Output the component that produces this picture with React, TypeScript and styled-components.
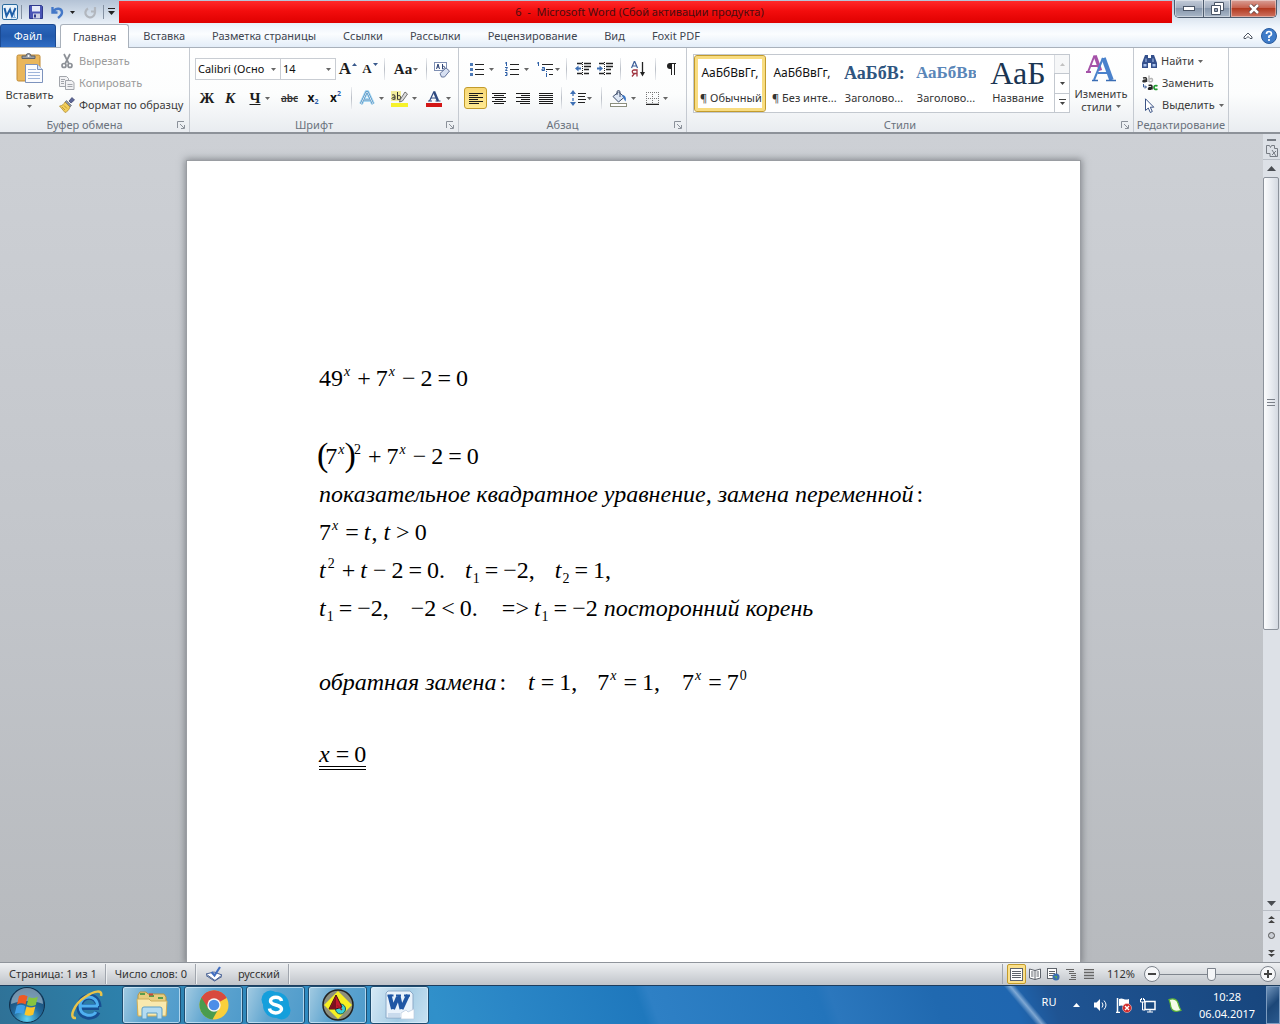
import React from "react";
import styled, { createGlobalStyle, css } from "styled-components";

const ui = `"Noto Sans", "Open Sans", sans-serif`;
const serif = `"Liberation Serif", "Times New Roman", serif`;

const GlobalStyle = createGlobalStyle`
  * { box-sizing: border-box; }
  body { margin: 0; font-family: ${ui}; font-size: 11px; line-height: 14px; color: #3b3b3b; }
  button, select, input { font: inherit; color: inherit; }
  button { border: 0; background: none; padding: 0; margin: 0; }
  svg { display: block; flex: none; }
`;

const Window = styled.div`
  height: 100vh;
  display: flex;
  flex-direction: column;
  overflow: hidden;
`;

/* ---------- title bar and tabs ---------- */

const Header = styled.header`
  flex: none;
  background: linear-gradient(#b4c3d6 0, #d3deea 14px, #eef4fb 26px, #fbfdff 34px, #e3edf8 47px);
  border-bottom: 1px solid #a9b1bb;
`;

const TitleBar = styled.div`
  display: flex;
  height: 24px;
`;

const QuickAccess = styled.div`
  display: flex;
  align-items: center;
  width: 119px;
  padding-left: 2px;
`;

const QuickButton = styled.button<{ $w: number }>`
  width: ${(p) => p.$w}px;
  height: 22px;
  display: flex;
  align-items: center;
  justify-content: center;
  gap: 6px;
`;

const QuickRule = styled.span`
  width: 1px;
  height: 14px;
  background: #8592a3;
`;

const Title = styled.h1`
  flex: 1;
  height: 22px;
  margin: 1px 2px 0 0;
  padding-right: 12px;
  font-size: 11px;
  font-weight: 400;
  line-height: 22px;
  text-align: center;
  white-space: pre;
  color: #4a0d10;
  background: linear-gradient(#ff2a2a, #f30d0d 45%, #df0000);
`;

const WindowButtons = styled.div`
  display: flex;
  height: 18px;
  margin-right: 3px;
  border: 1px solid #4e5c6e;
  border-top: 0;
  border-radius: 0 0 5px 5px;
  overflow: hidden;
`;

const WindowButton = styled.button<{ $w: number; $close?: boolean }>`
  width: ${(p) => p.$w}px;
  display: flex;
  align-items: center;
  justify-content: center;
  box-shadow: inset 0 0 0 1px rgba(255, 255, 255, 0.4);
  background: ${(p) =>
    p.$close
      ? "linear-gradient(#d9a097, #c8624f 45%, #b23a20 50%, #cf7462)"
      : "linear-gradient(#c3ccd9, #a4b0c1 45%, #8797ac 50%, #a9b7c8)"};
  & + & { border-left: 1px solid #4e5c6e; }
`;

const TabRow = styled.nav`
  display: flex;
  align-items: stretch;
  height: 23px;
`;

const FileTab = styled.button`
  width: 56px;
  border-radius: 3px 3px 0 0;
  border: 1px solid #1b4a93;
  border-bottom: 0;
  color: #fff;
  background: linear-gradient(#2d68bd, #2159ac 50%, #2f6cc4);
`;

const Tab = styled.button<{ $active?: boolean }>`
  padding: 0 13px 0 14px;
  color: #3f4650;
  white-space: nowrap;
  ${(p) =>
    p.$active &&
    css`
      height: 24px;
      margin: 0 0 0 4px;
      padding: 0 12px;
      border: 1px solid #a9b1bb;
      border-bottom: 0;
      border-radius: 3px 3px 0 0;
      background: #fff;
    `}
`;

const TabTools = styled.div`
  display: flex;
  align-items: center;
  gap: 8px;
  margin-left: auto;
  padding-right: 3px;
`;

/* ---------- ribbon ---------- */

const Ribbon = styled.section`
  flex: none;
  display: flex;
  height: 86px;
  background: linear-gradient(#fff, #fcfdfd 55%, #e9ecf0);
  border-bottom: 2px solid #8d9299;
`;

const Group = styled.div<{ $w: number }>`
  width: ${(p) => p.$w}px;
  flex: none;
  display: flex;
  flex-direction: column;
  border-right: 1px solid #c5cad1;
`;

const GroupBody = styled.div`
  flex: 1;
  display: flex;
  min-height: 0;
`;

const GroupFoot = styled.div`
  display: flex;
  align-items: center;
  height: 15px;
  padding: 0 4px 0 0;
  color: #6a727d;
`;

const GroupName = styled.span`
  flex: 1;
  text-align: center;
  white-space: nowrap;
`;

const FootButton = styled.button`
  padding-left: 8px;
`;

const PlainFoot = styled(GroupFoot)`
  padding: 0;
`;

const BigButton = styled.button<{ $w: number }>`
  width: ${(p) => p.$w}px;
  display: flex;
  flex-direction: column;
  align-items: center;
  padding-top: 4px;
  gap: 4px;
  line-height: 13px;
  white-space: nowrap;
`;

const Stack = styled.div`
  display: flex;
  flex-direction: column;
  padding-top: 2px;
`;

const SmallButton = styled.button`
  display: flex;
  align-items: center;
  gap: 4px;
  height: 22px;
  white-space: nowrap;
  &:disabled { color: #9b9b9b; }
`;

const Inline = styled.span`
  display: flex;
  align-items: center;
  justify-content: center;
  gap: 4px;
`;

const Rows = styled.div`
  display: flex;
  flex-direction: column;
  gap: 7px;
  padding: 10px 0 0 5px;
`;

const ToolRow = styled.div`
  display: flex;
  height: 22px;
`;

const Tool = styled.button<{ $w: number; $on?: boolean; $tight?: boolean }>`
  width: ${(p) => p.$w}px;
  display: flex;
  align-items: center;
  justify-content: center;
  gap: ${(p) => (p.$tight ? 1 : 4)}px;
  color: #111;
  ${(p) =>
    p.$on &&
    css`
      border: 1px solid #c29b2c;
      border-radius: 3px;
      background: linear-gradient(#f7d774, #fbe28a 50%, #ffe98f);
    `}
`;

const Rule = styled.span<{ $w: number }>`
  width: ${(p) => p.$w}px;
  display: flex;
  justify-content: center;
  &::before {
    content: "";
    width: 1px;
    background: linear-gradient(#eceef1, #b9bec6 50%, #eceef1);
  }
`;

const Combo = styled.label<{ $w: number }>`
  position: relative;
  width: ${(p) => p.$w}px;
  height: 22px;
  border: 1px solid #c9cdd3;
  background: #fff;
  & + & { border-left: 0; }
  svg { position: absolute; right: 4px; top: 9px; pointer-events: none; }
`;

const ComboSelect = styled.select`
  appearance: none;
  width: 100%;
  height: 20px;
  padding: 0 14px 0 2px;
  border: 0;
  background: transparent;
  color: #111;
`;

const Letter = styled.span<{ $size: number; $italic?: boolean; $line?: string }>`
  font-family: ${serif};
  font-size: ${(p) => p.$size}px;
  font-weight: 700;
  font-style: ${(p) => (p.$italic ? "italic" : "normal")};
  text-decoration: ${(p) => p.$line || "none"};
  color: #1c1c1c;
`;

const Struck = styled.s`
  font-weight: 600;
  font-size: 10px;
  color: #333;
`;

const Script = styled.span<{ $up?: boolean }>`
  font-family: ${ui};
  font-weight: 700;
  font-size: 12px;
  small {
    font-size: 7px;
    color: #2a5ca8;
    line-height: 0;
    vertical-align: ${(p) => (p.$up ? "6px" : "-2px")};
  }
`;

const Gallery = styled.div`
  display: flex;
  flex: none;
  width: 377px;
  height: 59px;
  margin: 6px 0 0 6px;
  border: 1px solid #c3c8cf;
  background: #fff;
`;

const StyleCard = styled.button<{ $on?: boolean }>`
  width: 72px;
  flex: none;
  display: flex;
  flex-direction: column;
  justify-content: flex-end;
  padding: 0 4px 5px;
  color: #333;
  border: 2px solid transparent;
  ${(p) =>
    p.$on &&
    css`
      border: 1px solid #c29b2c;
      border-radius: 3px;
      padding: 0 5px 6px;
      box-shadow: inset 0 0 0 3px #f8dc80;
    `}
`;

const Preview = styled.span<{ $size: number; $color: string; $serif?: boolean; $bold?: boolean }>`
  display: block;
  width: 100%;
  height: 34px;
  line-height: 32px;
  overflow: hidden;
  white-space: nowrap;
  text-align: center;
  font-family: ${(p) => (p.$serif ? serif : ui)};
  font-size: ${(p) => p.$size}px;
  font-weight: ${(p) => (p.$bold ? 700 : 400)};
  color: ${(p) => p.$color};
`;

const StyleName = styled.span`
  width: 100%;
  text-align: center;
  white-space: nowrap;
`;

const GalleryScroll = styled.div`
  flex: 1;
  display: flex;
  flex-direction: column;
`;

const GalleryStep = styled.button`
  flex: 1;
  display: flex;
  align-items: center;
  justify-content: center;
  border-left: 1px solid #c3c8cf;
  & + & { border-top: 1px solid #c3c8cf; }
  &:disabled { background: #f1f2f4; opacity: 0.6; }
`;

/* ---------- document ---------- */

const Workspace = styled.main`
  flex: 1;
  min-height: 0;
  display: flex;
  background: linear-gradient(#cdd0d5, #c3c6cb 50%, #b7babe);
`;

const Canvas = styled.div`
  flex: 1;
  display: flex;
  justify-content: center;
  overflow: hidden;
  padding: 27px 0 0 4px;
`;

const Sheet = styled.article`
  width: 893px;
  padding: 198px 132px 0;
  background: #fff;
  box-shadow: 0 0 0 1px #9a9da2, 0 0 7px 2px rgba(60, 64, 70, 0.5);
  font-family: ${serif};
  font-size: 24px;
  color: #000;
`;

const MathLine = styled.p`
  margin: 0;
  height: 38px;
  line-height: 38px;
  white-space: nowrap;
`;

const Blank = styled.div<{ $h: number }>`
  height: ${(p) => p.$h}px;
`;

const Op = styled.span`
  margin: 0 5px;
`;

const Var = styled.i`
  padding-right: 1px;
`;

const Sup = styled.sup`
  margin: 0 2px 0 1px;
  font-size: 14px;
  line-height: 0;
  vertical-align: 10px;
`;

const Sub = styled.sub`
  font-size: 14px;
  line-height: 0;
  vertical-align: -5px;
`;

const Paren = styled.span`
  margin: 0 -3px 0 -2px;
  font-size: 34px;
  line-height: 0;
  vertical-align: -2px;
`;

const Colon = styled.span`
  margin-left: 3px;
`;

const Quad = styled.span<{ $w?: number }>`
  display: inline-block;
  width: ${(p) => p.$w || 20}px;
`;

const Answer = styled.span`
  display: inline-block;
  height: 35px;
  border-bottom: 4px double #000;
`;

const ScrollBar = styled.aside`
  width: 17px;
  display: flex;
  flex-direction: column;
  background: #dde1e7;
  padding-top: 2px;
`;

const ScrollButton = styled.button<{ $h: number; $top?: boolean }>`
  height: ${(p) => p.$h}px;
  flex: none;
  display: flex;
  align-items: center;
  justify-content: center;
  border-top: ${(p) => (p.$top ? "1px solid #b9bec6" : "0")};
`;

const ScrollTrack = styled.div`
  flex: 1;
  padding-right: 1px;
`;

const ScrollThumb = styled.div`
  height: 63%;
  display: flex;
  align-items: center;
  justify-content: center;
  border: 1px solid #8c929b;
  border-radius: 2px;
  background: linear-gradient(90deg, #fbfcfd, #e9ecf1 50%, #d4d9e1);
`;

/* ---------- status bar ---------- */

const StatusBar = styled.footer`
  flex: none;
  height: 23px;
  display: flex;
  align-items: center;
  padding: 0 4px 0 0;
  border-top: 1px solid #8f949b;
  background: linear-gradient(#eef0f2, #d7dade 50%, #c0c4ca);
  color: #333;
`;

const StatusCell = styled.span`
  height: 20px;
  display: flex;
  align-items: center;
  gap: 15px;
  padding: 0 8px 0 9px;
  border-right: 1px solid #a0a5ad;
  box-shadow: 1px 0 0 #eef0f2;
  white-space: nowrap;
`;

const ViewTools = styled.div`
  display: flex;
  align-items: center;
  margin-left: auto;
  padding-left: 4px;
  border-left: 1px solid #a0a5ad;
`;

const ViewButton = styled.button<{ $on?: boolean }>`
  width: 18px;
  height: 20px;
  display: flex;
  align-items: center;
  justify-content: center;
  ${(p) =>
    p.$on &&
    css`
      width: 19px;
      border: 1px solid #c29b2c;
      border-radius: 2px;
      background: #fbe08a;
    `}
`;

const Percent = styled.output`
  width: 46px;
  text-align: center;
`;

const RoundButton = styled.button`
  width: 16px;
  height: 16px;
  display: flex;
  align-items: center;
  justify-content: center;
  border: 1px solid #7c828b;
  border-radius: 50%;
  background: #f6f7f9;
`;

const ZoomSlider = styled.input`
  appearance: none;
  width: 100px;
  height: 16px;
  margin: 0;
  background: linear-gradient(#7f858e, #7f858e) center / 100% 1px no-repeat;
  &::-webkit-slider-thumb {
    appearance: none;
    width: 9px;
    height: 13px;
    border: 1px solid #7c828b;
    border-radius: 1px 1px 5px 5px;
    background: #f4f5f7;
  }
`;

/* ---------- taskbar ---------- */

const TaskBar = styled.footer`
  flex: none;
  height: 39px;
  display: flex;
  align-items: stretch;
  border-top: 1px solid #1d3d5e;
  color: #fff;
  background:
    linear-gradient(50deg, transparent 42%, rgba(190, 215, 240, 0.6) 50%, transparent 57%) 1000px 0 / 52px 100% no-repeat,
    linear-gradient(70deg, #2f7196 0, #2d7fa9 9%, #3089bd 20%, #3090ca 34%, #2a86c6 40%, #1f78bd 50%, #2e80c5 51%, #2374bb 64%, #2b77bd 65%, #2069b0 73%, #1f66b0 79%, #1f5493 82%, #17457c 100%);
`;

const StartButton = styled.button`
  width: 54px;
  display: flex;
  align-items: center;
  justify-content: center;
`;

const TaskButton = styled.button<{ $plain?: boolean; $active?: boolean }>`
  width: 59px;
  margin: 0 3px 0 0;
  display: flex;
  align-items: center;
  justify-content: center;
  ${(p) =>
    p.$plain
      ? css`
          width: 65px;
        `
      : css`
          border: 1px solid #1e4d70;
          border-radius: 3px;
          box-shadow: inset 0 0 0 1px rgba(225, 243, 255, 0.65);
          background: ${p.$active
            ? "linear-gradient(110deg, #d7e9f5, #a3cbe4 55%, #c9e2f2)"
            : "linear-gradient(110deg, #a3cbe2, #5ea4cf 45%, #4f9bcb)"};
        `}
`;

const Tray = styled.div`
  display: flex;
  align-items: center;
  margin-left: auto;
`;

const TrayButton = styled.button<{ $w: number }>`
  width: ${(p) => p.$w}px;
  height: 36px;
  display: flex;
  align-items: center;
  justify-content: center;
`;

const Language = styled(TrayButton)`
  align-items: flex-start;
  padding-top: 8px;
`;

const Clock = styled.time`
  width: 78px;
  font-size: 11px;
  line-height: 17px;
  text-align: center;
  white-space: pre;
`;

const ShowDesktop = styled.button`
  width: 14px;
  align-self: stretch;
  border: 1px solid #7d9cc0;
  background: linear-gradient(135deg, #6f93ba, #1c4778 50%, #2b5a8e);
`;

/* ---------- icons ---------- */

const Caret = ({ color = "#666" }: { color?: string }) => (
  <svg width="5" height="3" viewBox="0 0 5 3"><path d="M0 0h5L2.500 3z" fill={color} /></svg>
);

const WordLogo = () => (
  <svg width="16" height="16" viewBox="0 0 16 16">
    <rect x=".5" y=".5" width="15" height="15" rx="1.500" fill="#eaf3fb" stroke="#2a6a9e" />
    <path d="M2.500 4l2 8L8 5.500 10 12l3.500-8" fill="none" stroke="#1f5fa8" strokeWidth="2" />
    <path d="M12.500 9v4M10 13.500h4" stroke="#8bb7dc" />
  </svg>
);

const Save = () => (
  <svg width="14" height="14" viewBox="0 0 14 14">
    <path d="M.5.5h12l1 1v12H.5z" fill="#4a55b5" stroke="#2f3a8c" />
    <rect x="3" y="1" width="8" height="5.500" fill="#e6ebf8" />
    <rect x="4" y="8.500" width="7" height="5" fill="#cfd3e6" />
    <rect x="5" y="9.500" width="2" height="3" fill="#2f3a8c" />
  </svg>
);

const Undo = ({ off }: { off?: boolean }) => (
  <svg width="13" height="13" viewBox="0 0 13 13">
    {off ? (
      <path d="M11 1v4.500H7M4 2.500A4.700 4.700 0 1 0 10 4" fill="none" stroke="#b2b7be" strokeWidth="2.200" />
    ) : (
      <path d="M1.500 1v5.500h5M2.500 5.500C5 1.500 11 2 11 6.500c0 2.500-2 4-4 5.500" fill="none" stroke="#4478c8" strokeWidth="2.400" />
    )}
  </svg>
);

const Customize = () => (
  <svg width="7" height="8" viewBox="0 0 7 8"><path d="M0 .5h7" stroke="#222" /><path d="M0 3h7L3.500 7z" fill="#222" /></svg>
);

const Clipboard = () => (
  <svg width="28" height="32" viewBox="0 0 28 32">
    <rect x="1" y="3" width="23" height="26" rx="1.500" fill="#e9b65c" stroke="#c08a35" />
    <path d="M6 6.500V4h4a2.500 2.500 0 0 1 5 0h4v2.500z" fill="#9a9fa6" stroke="#5f6369" />
    <circle cx="12.500" cy="4" r="1" fill="#fff" />
    <path d="M9.500 12.500h12l5 5v13h-17z" fill="#fbfcff" stroke="#7d93bd" />
    <path d="M21.500 12.500v5h5" fill="#d9e4f6" stroke="#7d93bd" />
    <path d="M12 17.500h8M12 20.500h12M12 23.500h12M12 26.500h12" stroke="#9fb5da" />
  </svg>
);

const Scissors = () => (
  <svg width="16" height="16" viewBox="0 0 16 16" fill="none" stroke="#8d9197" strokeWidth="1.700">
    <path d="M5 1l5 10M11 1L6 11" /><circle cx="5" cy="12.500" r="2" /><circle cx="11" cy="12.500" r="2" />
  </svg>
);

const Copy = () => (
  <svg width="16" height="16" viewBox="0 0 16 16" fill="#f1f1f3" stroke="#a2a5ab">
    <path d="M.5 1.500h7l2 2v8h-9z" /><path d="M6.500 5.500h6l2.500 2v7H6.500z" />
    <path d="M2 4.500h4M2 6.500h3M2 8.500h3M8.500 9.500h5M8.500 11.500h5" />
  </svg>
);

const Brush = () => (
  <svg width="16" height="16" viewBox="0 0 16 16">
    <path d="M10 4l3-3.500 2.500 2.500L12 6z" fill="#5c6696" stroke="#39406c" strokeWidth=".7" />
    <path d="M7.500 3.500l5 5-1.500 1.500-5-5z" fill="#8b93a0" stroke="#555b68" strokeWidth=".6" />
    <path d="M6 5l5 5c-1 3-3 5-5 5.500L.5 9C3 9 5 7 6 5z" fill="#f3cf5b" stroke="#a7822a" strokeWidth=".7" />
    <path d="M3 10l3 3M5 8.500l3 3" stroke="#a7822a" strokeWidth=".7" />
  </svg>
);

const Launcher = () => (
  <svg width="8" height="8" viewBox="0 0 8 8" fill="none" stroke="#8b919a">
    <path d="M7 .5H.5V7" /><path d="M3 3l4 4M7.500 4v3.500H4" />
  </svg>
);

const Grow = ({ down }: { down?: boolean }) => (
  <svg width="5" height="12" viewBox="0 0 5 12"><path d={down ? "M0 0h5L2.500 3z" : "M0 3h5L2.500 0z"} fill="#39598c" /></svg>
);

const Eraser = () => (
  <svg width="17" height="17" viewBox="0 0 17 17">
    <rect x="1.500" y="1.500" width="12" height="8" fill="#fff" stroke="#7e8fb3" />
    <path d="M3.500 8l1.500-5L6.500 8M4 6h2M9.500 3v5M9.500 5.500c3-1 3 2.500 0 2.500" fill="none" stroke="#2f4576" />
    <path d="M7 12.500l6-5.500 3.500 3-5 6H8.500z" fill="#d7e0f2" stroke="#66769c" />
  </svg>
);

const GlowA = () => (
  <svg width="16" height="16" viewBox="0 0 16 16" fill="none" strokeLinejoin="round">
    <path d="M2 14L7.500 2h1L14 14M4.500 10h7" stroke="#a9d8f3" strokeWidth="4" />
    <path d="M2 14L7.500 2h1L14 14M4.500 10h7" stroke="#3f86bb" strokeWidth="2" />
    <path d="M2 14L7.500 2h1L14 14M4.500 10h7" stroke="#fff" strokeWidth=".8" />
  </svg>
);

const MarkerPen = () => (
  <svg width="17" height="17" viewBox="0 0 17 17">
    <rect x="0" y="1" width="10" height="10" fill="#f3ee9b" />
    <path d="M1 5q3-1 3 1v3.500M4 7q-3 0-3 1.500T4 9M6.500 2v7.500M6.500 6q3-1.500 3 1.500T6.500 9" fill="none" stroke="#333" />
    <path d="M9 10l5-8 2.500 2-5 7-3 1z" fill="#dcdcdc" stroke="#555" strokeWidth=".8" />
    <rect y="13" width="17" height="4" fill="#f6f22a" />
  </svg>
);

const FontColor = () => (
  <svg width="16" height="17" viewBox="0 0 16 17">
    <path d="M3.500 11L8 1.500" stroke="#2f4a80" strokeWidth="1.200" />
    <path d="M8 1.500l4 9.500" stroke="#2f4a80" strokeWidth="2.400" />
    <path d="M5 8h5M2 11h4M9.500 11h5" stroke="#2f4a80" />
    <rect y="13" width="16" height="4" fill="#d31717" />
  </svg>
);

const Bullets = ({ numbers }: { numbers?: boolean }) => (
  <svg width="15" height="14" viewBox="0 0 15 14">
    <path d="M5 2.500h9M5 7.500h9M5 12.500h9" stroke="#222" />
    {numbers ? (
      <path d="M1.500 0v4M0 1h2M0 5.500h2.500L.5 8.500h2M0 10.500h2v1.500H1M2 12v1.500H0" fill="none" stroke="#2d5fa6" />
    ) : (
      <path d="M0 1h3v3H0zM0 6h3v3H0zM0 11h3v3H0z" fill="#4d7ab8" />
    )}
  </svg>
);

const MultiLevel = () => (
  <svg width="17" height="15" viewBox="0 0 17 15">
    <path d="M5 2.500h11M9 7.500h7M12 12.500h4" stroke="#222" />
    <path d="M1.500 0v4M0 1h2M5 5.500h2.500v3H5V7h2M9.500 11v4M9.500 9v1" fill="none" stroke="#2d5fa6" />
  </svg>
);

const Indent = ({ out }: { out?: boolean }) => (
  <svg width="17" height="14" viewBox="0 0 17 14">
    <path d="M2 1.500h5M9 1.500h7M9 4.500h7M9 7.500h5M2 11.500h5M9 11.500h5" stroke="#222" strokeWidth="1.500" />
    <path d="M7.500 0v14" stroke="#222" strokeDasharray="1 1" />
    <path d={out ? "M0 6.500L3.500 3.500V9.500z" : "M6 6.500L2.500 3.500V9.500z"} fill="#3e70b5" />
    <path d={out ? "M3 6.500h3" : "M0 6.500h3"} stroke="#3e70b5" strokeWidth="2" />
  </svg>
);

const SortIcon = () => (
  <svg width="15" height="16" viewBox="0 0 15 16">
    <path d="M.5 7L3.500 0 6.500 7M1.500 5h4" fill="none" stroke="#3a5c98" strokeWidth="1.200" />
    <path d="M6 15.500V9H3a1.500 1.500 0 0 0 0 3.500h3M3.500 12.500L1 15.500" fill="none" stroke="#a03440" strokeWidth="1.300" />
    <path d="M11.500 1v12" stroke="#222" strokeWidth="1.300" /><path d="M9 11h5l-2.500 4.500z" fill="#222" />
  </svg>
);

const Pilcrow = () => (
  <svg width="10" height="12" viewBox="0 0 10 12">
    <path d="M5 0v6H4A3 3 0 0 1 4 0z" fill="#222" /><path d="M3.500.5H10M5.500.5V12M8.500.5V12" stroke="#222" />
  </svg>
);

const alignPaths: Record<string, string> = {
  left: "M0 .5h14M0 2.500h9M0 4.500h14M0 6.500h9M0 8.500h14M0 10.500h10",
  center: "M0 .5h14M2 2.500h10M0 4.500h14M3 6.500h8M0 8.500h14M2 10.500h10",
  right: "M0 .5h14M5 2.500h9M0 4.500h14M5 6.500h9M0 8.500h14M4 10.500h10",
  justify: "M0 .5h14M0 2.500h14M0 4.500h14M0 6.500h14M0 8.500h14M0 10.500h14",
};

const Align = ({ kind }: { kind: string }) => (
  <svg width="14" height="11" viewBox="0 0 14 11"><path d={alignPaths[kind]} stroke="#1b1b1b" /></svg>
);

const Spacing = () => (
  <svg width="16" height="16" viewBox="0 0 16 16">
    <path d="M3 3v10" stroke="#3e70b5" strokeWidth="1.300" strokeDasharray="3 2" />
    <path d="M0 4h6L3 0zM0 12h6l-3 4z" fill="#3e70b5" />
    <path d="M8 3.500h8M8 6.500h7M8 9.500h8M8 12.500h7" stroke="#222" />
  </svg>
);

const Bucket = () => (
  <svg width="17" height="17" viewBox="0 0 17 17">
    <path d="M3 6.500L8.500 2l6 5-6 5z" fill="#dfe8f5" stroke="#3c4c6b" />
    <path d="M7 5V2a1.500 1.500 0 0 1 3 0v5" fill="none" stroke="#3c4c6b" />
    <path d="M13 5c3 1 3.500 4 2.500 6.500C14 10 14 8 12 6z" fill="#3f78c6" />
    <rect x=".5" y="13.500" width="16" height="3" fill="#fff" stroke="#8c8f7e" />
  </svg>
);

const Borders = () => (
  <svg width="13" height="13" viewBox="0 0 13 13">
    <path d="M.5 0v12M6.500 0v12M12.500 0v12M0 .5h13M0 6.500h13" stroke="#777" strokeDasharray="1 1" />
    <path d="M0 12.500h13" stroke="#222" strokeWidth="1.500" />
  </svg>
);

const ChangeStyles = () => (
  <svg width="30" height="31" viewBox="0 0 30 31" fill="none">
    <path d="M2 20L8.500 3.500" stroke="#a552a8" strokeWidth="2" />
    <path d="M9 3.500l5.500 15" stroke="#a552a8" strokeWidth="3.500" />
    <path d="M5 14h8M0 20h5" stroke="#a552a8" strokeWidth="2" />
    <path d="M8 28L17 6M12 21h11" stroke="#4a82cc" strokeWidth="2" />
    <path d="M17.500 6L25.500 28" stroke="#4a82cc" strokeWidth="4.500" />
    <path d="M6 28.500h6M20 28.500h10" stroke="#3a6db4" strokeWidth="1.500" />
  </svg>
);

const Binoculars = () => (
  <svg width="15" height="13" viewBox="0 0 15 13">
    <path d="M3 0h3v3h3V0h3l3 8v5H9V8H6v5H0V8z" fill="#34508c" />
    <path d="M1.500 9h3v2.500h-3zM10.500 9h3v2.500h-3zM3.500 3.500h1V7h-1zM10.500 3.500h1V7h-1z" fill="#a9c2ec" />
  </svg>
);

const ReplaceIcon = () => (
  <svg width="16" height="16" viewBox="0 0 16 16" fill="none" strokeWidth="1.500">
    <path d="M1 3q3.500-1 3.500 1v3M4.500 5Q1 4.800 1 6.200T4.500 6" stroke="#333" />
    <path d="M7 .5v6.500M7 4q3.500-1.500 3.500 1T7 6.500" stroke="#b5b5b5" />
    <path d="M6.500 10.500q3.500-1 3.500 1v3M10 12.500q-3.500-.2-3.500 1.200T10 13.500" stroke="#222" />
    <path d="M15.500 10.800q-3.500-1-3.500 1.700t3.500 1.700" stroke="#219a2f" strokeWidth="1.800" />
    <path d="M1.500 9v3H4M3 10.500L4.500 12 3 13.500" stroke="#3a5c98" strokeWidth="1" />
  </svg>
);

const Pointer = () => (
  <svg width="16" height="15" viewBox="0 0 16 15">
    <path d="M3.500.8v11.700L6.300 10l2 4.500 2-1-2-4.300h3.500z" fill="#fff" stroke="#3c5486" />
  </svg>
);

const DoubleArrow = ({ down }: { down?: boolean }) => (
  <svg width="7" height="7" viewBox="0 0 7 7"><path d={down ? "M0 0h7L3.500 3zM0 4h7L3.500 7z" : "M0 3h7L3.500 0zM0 7h7L3.500 4z"} fill="#444" /></svg>
);

const ScrollArrow = ({ down }: { down?: boolean }) => (
  <svg width="9" height="5" viewBox="0 0 9 5"><path d={down ? "M0 0h9L4.500 5z" : "M0 5h9L4.500 0z"} fill="#4a4d52" /></svg>
);

const Proof = () => (
  <svg width="18" height="16" viewBox="0 0 18 16">
    <path d="M1 8l8-2 8 3-7 5.500z" fill="#fff" stroke="#4a6396" />
    <path d="M1 9.500l8.500 5.500L17 10.500" fill="none" stroke="#4a6396" />
    <path d="M6.500 6l3 3.500L15 1" fill="none" stroke="#426fc0" strokeWidth="2.200" />
  </svg>
);

const PageView = () => (
  <svg width="13" height="13" viewBox="0 0 13 13"><rect x=".5" y=".5" width="12" height="12" fill="#fff" stroke="#5e636b" /><path d="M2 3.500h9M2 5.500h9M2 7.500h9M2 9.500h9" stroke="#5e636b" /></svg>
);
const BookView = () => (
  <svg width="12" height="12" viewBox="0 0 12 12"><path d="M.5 1l5.500 1.500L11.500 1v9L6 11.500.5 10z" fill="#fff" stroke="#5e636b" /><path d="M6 2.500v9M2 4h2.500M2 6h2.500M2 8h2.500M7.500 4H10M7.500 6H10M7.500 8H10" stroke="#5e636b" /></svg>
);
const WebView = () => (
  <svg width="13" height="13" viewBox="0 0 13 13"><rect x=".5" y=".5" width="9" height="10" fill="#fff" stroke="#5e636b" /><path d="M2 3.500h6M2 5.500h6M2 7.500h4" stroke="#5e636b" /><circle cx="9" cy="9" r="3.500" fill="#3d6fb0" /><path d="M7 8h3v3z" fill="#57a957" /></svg>
);
const OutlineView = () => (
  <svg width="11" height="11" viewBox="0 0 11 11"><path d="M0 .5h8M3 2.500h5M3 4.500h7M5 6.500h5M5 8.500h5M3 10.500h7" stroke="#666" /></svg>
);
const DraftView = () => (
  <svg width="10" height="10" viewBox="0 0 10 10"><path d="M0 .5h10M0 3.500h10M0 6.500h10M0 9.500h10" stroke="#666" strokeWidth="1.300" /></svg>
);

const StartOrb = () => (
  <svg width="38" height="38" viewBox="0 0 38 38">
    <defs>
      <radialGradient id="orb" cx=".5" cy=".9" r=".9"><stop offset="0" stopColor="#5fd4f4" /><stop offset=".45" stopColor="#236a9c" /><stop offset="1" stopColor="#133a60" /></radialGradient>
    </defs>
    <circle cx="19" cy="19" r="17.500" fill="url(#orb)" stroke="#10304c" />
    <path d="M3 18a16 16 0 0 1 32 0c-9-4-22-4-32 0z" fill="#cfdfea" opacity=".5" />
    <path d="M11 10c3.500-1.800 6-1.200 8.500.3l-2 8.200c-3-1.500-5.500-1.600-8.500 0z" fill="#ee5a24" />
    <path d="M20.800 11c3 1.400 5.700 1.300 9-.3l-2 8.300c-3 1.600-5.800 1.300-9-.1z" fill="#86c440" />
    <path d="M8.700 19.800c3-1.500 5.600-1.300 8.500.1l-2 8.200c-2.800-1.500-5.700-1.500-8.500 0z" fill="#3f9fe8" />
    <path d="M18.500 20.500c3 1.300 5.800 1.400 8.900 0l-2.200 8.200c-3 1.500-5.800 1.300-8.700 0z" fill="#fcc529" />
  </svg>
);

const Explorer = () => (
  <svg width="34" height="34" viewBox="0 0 34 34" fill="none">
    <path d="M29 19H11M28.500 19c0-14-19-13-19 0 0 12 15 12 18 5" stroke="#174f92" strokeWidth="6" />
    <path d="M28 18H11M27.500 18c0-12-17-12-17.500 0 0 11 13 11 16 6" stroke="#4fb0f0" strokeWidth="3" />
    <path d="M6 30C-2 31 4 16 15 9 24 3 33 1 31 8" stroke="#e8c34a" strokeWidth="2.500" />
  </svg>
);

const Folder = () => (
  <svg width="34" height="32" viewBox="0 0 34 32">
    <path d="M3 6l2-3h6l2 2h16l2 3v18H3z" fill="#e7cd7f" stroke="#b79443" />
    <path d="M5 5h5M14 7h5M23 9h5" stroke="#5a9c4c" strokeWidth="2" /><path d="M14 5.500h4" stroke="#c94b3c" strokeWidth="2" />
    <path d="M2 10h12l2 2h16l-1 15H3z" fill="#f9e9ae" stroke="#cdae5b" />
    <path d="M7 30V20q0-2 2-2h16q2 0 2 2v10h-5v-6H12v6z" fill="#b4dcf2" stroke="#5b9dc6" />
  </svg>
);

const Chrome = () => (
  <svg width="30" height="30" viewBox="0 0 30 30">
    <circle cx="15" cy="15" r="14.500" fill="#f9cf3c" />
    <path d="M15 15L2.500 7.500A14.500 14.500 0 0 1 27.600 8z" fill="#d84a3e" />
    <path d="M15 15L2.500 7.500A14.500 14.500 0 0 0 13.500 29.400L20 18z" fill="#4a9c4e" />
    <path d="M15 8h12.600A14.500 14.500 0 0 0 2.500 7.500L9 18z" fill="#d84a3e" />
    <circle cx="15" cy="15" r="6.700" fill="#f6f6f6" /><circle cx="15" cy="15" r="5.300" fill="#4b8de8" />
  </svg>
);

const Skype = () => (
  <svg width="32" height="32" viewBox="0 0 32 32">
    <circle cx="10.500" cy="10.500" r="9" fill="#159fdc" /><circle cx="21.500" cy="21.500" r="9" fill="#159fdc" /><circle cx="16" cy="16" r="13" fill="#159fdc" />
    <path d="M21.500 12c-.5-5-11-5-11 0 0 5 11 3 11 8s-11.500 5.500-12-.5" fill="none" stroke="#fff" strokeWidth="3.500" />
  </svg>
);

const Shapes = () => (
  <svg width="32" height="32" viewBox="0 0 32 32">
    <circle cx="16" cy="16" r="15" fill="#8d8f7c" stroke="#222" strokeWidth="1.500" />
    <path d="M16 2l14 14-14 14L2 16z" fill="#f7ef22" />
    <circle cx="18.500" cy="20" r="5" fill="#35d3d8" stroke="#14575a" />
    <path d="M14 6l6 12-6 2H7z" fill="#c4182b" stroke="#401010" /><path d="M14 8v12H7.500z" fill="#7c1020" />
    <path d="M15 16l5 5" stroke="#a01a28" strokeWidth="1.500" />
  </svg>
);

const WordTask = () => (
  <svg width="32" height="32" viewBox="0 0 32 32">
    <path d="M4 2h22l3 3v24H2V4z" fill="#e9f2fb" stroke="#8caac8" />
    <path d="M5.500 6L9 20M9 20l5-12M14.500 7L17.500 20M17.500 20L24 6" fill="none" stroke="#1f56a4" strokeWidth="4" />
    <path d="M3.500 6.500h6M12 6.500h5M20 6.500h6" stroke="#1f56a4" strokeWidth="2" />
    <path d="M17 24l5-3 2 2 6-3v10H17z" fill="#fff" stroke="#b7c8dc" strokeWidth=".7" />
    <path d="M4 25h12M4 27h12" stroke="#a9c3de" />
  </svg>
);

const Speaker = () => (
  <svg width="14" height="14" viewBox="0 0 14 14"><path d="M1 4.500h2.500L7 1v12L3.500 9.500H1z" fill="#fff" /><path d="M9 4.500q2 2.500 0 5M11 2.500q4 4.500 0 9" fill="none" stroke="#fff" /></svg>
);
const Flag = () => (
  <svg width="16" height="16" viewBox="0 0 16 16"><path d="M1.500 1v14M0 15.500h4" stroke="#fff" strokeWidth="1.500" /><path d="M3 2c4-2 5 2 10 0v7c-5 2-6-2-10 0z" fill="#fff" /><circle cx="11" cy="11" r="4.500" fill="#cf2626" stroke="#f3d2d2" strokeWidth=".6" /><path d="M9 9l4 4M13 9l-4 4" stroke="#fff" strokeWidth="1.400" /></svg>
);
const Network = () => (
  <svg width="16" height="15" viewBox="0 0 16 15" fill="none" stroke="#fff"><rect x="5" y="3.500" width="10" height="8" fill="#1b4a80" strokeWidth="1.500" /><path d="M7 14h6M10 12v2M.5 1v3h4V1M2.500 4v8H5M1.500 0v2M3.500 0v2" /></svg>
);
const Leaf = () => (
  <svg width="15" height="15" viewBox="0 0 15 15"><path d="M2 1.500Q9-.5 11 5q1 4 3 7.500Q6 15 4 9.500 3.500 5 2 1.500z" fill="#f4fbe8" stroke="#5fb535" strokeWidth="1.200" /></svg>
);
const Help = () => (
  <svg width="16" height="16" viewBox="0 0 16 16"><circle cx="8" cy="8" r="7.500" fill="#3f7cc9" stroke="#2a5c9e" /><path d="M5.500 6q0-2.500 2.500-2.500T10.500 6Q10.500 7.300 8 8.300V10M8 11v2" fill="none" stroke="#fff" strokeWidth="1.700" /></svg>
);

/* ---------- composition ---------- */

const tabs = ["Вставка", "Разметка страницы", "Ссылки", "Рассылки", "Рецензирование", "Вид", "Foxit PDF"];

const styleCards = [
  { sample: "АаБбВвГг,", name: "¶ Обычный", size: 12, color: "#111", on: true },
  { sample: "АаБбВвГг,", name: "¶ Без инте...", size: 12, color: "#111" },
  { sample: "АаБбВ:", name: "Заголово...", size: 18, color: "#2f5580", serif: true, bold: true },
  { sample: "АаБбВв", name: "Заголово...", size: 17, color: "#5a86b8", serif: true, bold: true },
  { sample: "АаБ", name: "Название", size: 32, color: "#1b3552", serif: true },
];

const Foot = ({ name }: { name: string }) => (
  <GroupFoot><GroupName>{name}</GroupName><FootButton aria-label={name + ": параметры"}><Launcher /></FootButton></GroupFoot>
);

const TitleStrip = () => (
  <TitleBar>
    <QuickAccess>
      <WordLogo />
      <QuickButton $w={7} as="span"><QuickRule /></QuickButton>
      <QuickButton $w={23} aria-label="Сохранить"><Save /></QuickButton>
      <QuickButton $w={30} aria-label="Отменить"><Undo /><Caret color="#222" /></QuickButton>
      <QuickButton $w={26} aria-label="Повторить"><Undo off /></QuickButton>
      <QuickRule />
      <QuickButton $w={15} aria-label="Настройка панели"><Customize /></QuickButton>
    </QuickAccess>
    <Title>{"6  -  Microsoft Word (Сбой активации продукта)"}</Title>
    <WindowButtons>
      <WindowButton $w={28} aria-label="Свернуть">
        <svg width="12" height="5" viewBox="0 0 12 5"><rect x=".5" y=".5" width="11" height="4" fill="#fff" stroke="#4a5566" /></svg>
      </WindowButton>
      <WindowButton $w={27} aria-label="Восстановить">
        <svg width="13" height="13" viewBox="0 0 13 13">
          <path d="M3.500.5h9v8h-9z" fill="#fff" stroke="#4a5566" />
          <path d="M.5 3.500h9v9h-9z" fill="#fff" stroke="#4a5566" />
          <path d="M3.500 6.500h3v3h-3z" fill="#9aa7b9" stroke="#4a5566" />
        </svg>
      </WindowButton>
      <WindowButton $w={46} $close aria-label="Закрыть">
        <svg width="12" height="10" viewBox="0 0 12 10"><path d="M2 1l8 8M10 1L2 9" stroke="#5a3a3a" strokeWidth="4" /><path d="M2 1l8 8M10 1L2 9" stroke="#fff" strokeWidth="2.500" /></svg>
      </WindowButton>
    </WindowButtons>
  </TitleBar>
);

const Tabs = () => (
  <TabRow>
    <FileTab>Файл</FileTab>
    <Tab $active>Главная</Tab>
    {tabs.map((t) => <Tab key={t}>{t}</Tab>)}
    <TabTools>
      <button aria-label="Свернуть ленту"><svg width="10" height="8" viewBox="0 0 10 8"><path d="M1 6.500V5l4-4 4 4v1.500H7L5 4.500 3 6.500z" fill="#fff" stroke="#4c5563" /></svg></button>
      <button aria-label="Справка"><Help /></button>
    </TabTools>
  </TabRow>
);

const ClipboardGroup = () => (
  <Group $w={190}>
    <GroupBody>
      <BigButton $w={59}><Clipboard />Вставить<Caret /></BigButton>
      <Stack>
        <SmallButton disabled><Scissors />Вырезать</SmallButton>
        <SmallButton disabled><Copy />Копировать</SmallButton>
        <SmallButton><Brush />Формат по образцу</SmallButton>
      </Stack>
    </GroupBody>
    <Foot name="Буфер обмена" />
  </Group>
);

const FontGroup = () => (
  <Group $w={269}>
    <GroupBody>
      <Rows>
        <ToolRow>
          <Combo $w={86}><ComboSelect aria-label="Шрифт"><option>Calibri (Осно</option></ComboSelect><Caret /></Combo>
          <Combo $w={55}><ComboSelect aria-label="Размер шрифта"><option>14</option></ComboSelect><Caret /></Combo>
          <Tool $w={24} $tight aria-label="Увеличить размер"><Letter $size={17}>A</Letter><Grow /></Tool>
          <Tool $w={20} $tight aria-label="Уменьшить размер"><Letter $size={13}>A</Letter><Grow down /></Tool>
          <Rule $w={9} />
          <Tool $w={34} $tight><Letter $size={15}>Aa</Letter><Caret /></Tool>
          <Rule $w={7} />
          <Tool $w={22} aria-label="Очистить формат"><Eraser /></Tool>
        </ToolRow>
        <ToolRow>
          <Tool $w={24}><Letter $size={15}>Ж</Letter></Tool>
          <Tool $w={22}><Letter $size={15} $italic>К</Letter></Tool>
          <Tool $w={37}><Letter $size={15} $line="underline">Ч</Letter><Caret /></Tool>
          <Tool $w={23}><Struck>abc</Struck></Tool>
          <Tool $w={24}><Script>x<small>2</small></Script></Tool>
          <Tool $w={21}><Script $up>x<small>2</small></Script></Tool>
          <Rule $w={10} />
          <Tool $w={30} aria-label="Эффекты"><GlowA /><Caret /></Tool>
          <Tool $w={36} aria-label="Цвет выделения"><MarkerPen /><Caret /></Tool>
          <Tool $w={32} aria-label="Цвет текста"><FontColor /><Caret /></Tool>
        </ToolRow>
      </Rows>
    </GroupBody>
    <Foot name="Шрифт" />
  </Group>
);

const ParagraphGroup = () => (
  <Group $w={228}>
    <GroupBody>
      <Rows>
        <ToolRow>
          <Tool $w={35} aria-label="Маркеры"><Bullets /><Caret /></Tool>
          <Tool $w={35} aria-label="Нумерация"><Bullets numbers /><Caret /></Tool>
          <Tool $w={28} $tight aria-label="Многоуровневый список"><MultiLevel /><Caret /></Tool>
          <Rule $w={9} />
          <Tool $w={24} aria-label="Уменьшить отступ"><Indent out /></Tool>
          <Tool $w={20} aria-label="Увеличить отступ"><Indent /></Tool>
          <Rule $w={10} />
          <Tool $w={26} aria-label="Сортировка"><SortIcon /></Tool>
          <Rule $w={8} />
          <Tool $w={24} aria-label="Все знаки"><Pilcrow /></Tool>
        </ToolRow>
        <ToolRow>
          <Tool $w={23} $on aria-label="По левому краю"><Align kind="left" /></Tool>
          <Tool $w={24} aria-label="По центру"><Align kind="center" /></Tool>
          <Tool $w={23} aria-label="По правому краю"><Align kind="right" /></Tool>
          <Tool $w={23} aria-label="По ширине"><Align kind="justify" /></Tool>
          <Rule $w={9} />
          <Tool $w={30} $tight aria-label="Интервал"><Spacing /><Caret /></Tool>
          <Rule $w={10} />
          <Tool $w={34} aria-label="Заливка"><Bucket /><Caret /></Tool>
          <Tool $w={34} aria-label="Границы"><Borders /><Caret /></Tool>
        </ToolRow>
      </Rows>
    </GroupBody>
    <Foot name="Абзац" />
  </Group>
);

const StylesGroup = () => (
  <Group $w={447}>
    <GroupBody>
      <Gallery>
        {styleCards.map((s, i) => (
          <StyleCard key={i} $on={s.on}>
            <Preview $size={s.size} $color={s.color} $serif={s.serif} $bold={s.bold}>{s.sample}</Preview>
            <StyleName>{s.name}</StyleName>
          </StyleCard>
        ))}
        <GalleryScroll>
          <GalleryStep disabled aria-label="Вверх"><svg width="5" height="3" viewBox="0 0 5 3"><path d="M0 3h5L2.500 0z" fill="#999" /></svg></GalleryStep>
          <GalleryStep aria-label="Вниз"><Caret color="#444" /></GalleryStep>
          <GalleryStep aria-label="Ещё"><svg width="7" height="7" viewBox="0 0 7 7"><path d="M0 .5h7" stroke="#444" /><path d="M1 3h5L3.500 6z" fill="#444" /></svg></GalleryStep>
        </GalleryScroll>
      </Gallery>
      <BigButton $w={62}>
        <ChangeStyles />
        <span>Изменить<Inline>стили <Caret /></Inline></span>
      </BigButton>
    </GroupBody>
    <Foot name="Стили" />
  </Group>
);

const EditStack = styled(Stack)`
  padding-left: 8px;
`;

const EditingGroup = () => (
  <Group $w={95}>
    <GroupBody>
      <EditStack>
        <SmallButton><Binoculars />Найти <Caret /></SmallButton>
        <SmallButton><ReplaceIcon />Заменить</SmallButton>
        <SmallButton><Pointer />Выделить <Caret /></SmallButton>
      </EditStack>
    </GroupBody>
    <PlainFoot><GroupName>Редактирование</GroupName></PlainFoot>
  </Group>
);

const X = () => <Sup><i>x</i></Sup>;
const T = ({ n }: { n?: number }) => <><Var>t</Var>{n && <Sub>{n}</Sub>}</>;

const Document = () => (
  <Sheet>
    <MathLine>49<X /><Op>+</Op>7<X /><Op>−</Op>2<Op>=</Op>0</MathLine>
    <Blank $h={40} />
    <MathLine><Paren>(</Paren>7<X /><Paren>)</Paren><Sup>2</Sup><Op>+</Op>7<X /><Op>−</Op>2<Op>=</Op>0</MathLine>
    <MathLine><i>показательное квадратное уравнение, замена переменной</i><Colon>:</Colon></MathLine>
    <MathLine>7<X /><Op>=</Op><T />, <T /><Op>&gt;</Op>0</MathLine>
    <MathLine><T /><Sup>2</Sup><Op>+</Op><T /><Op>−</Op>2<Op>=</Op>0.<Quad /><T n={1} /><Op>=</Op>−2,<Quad /><T n={2} /><Op>=</Op>1,</MathLine>
    <MathLine><T n={1} /><Op>=</Op>−2,<Quad $w={22} />−2<Op>&lt;</Op>0.<Quad $w={24} />=&gt;<Quad $w={5} /><T n={1} /><Op>=</Op>−2 <i>посторонний корень</i></MathLine>
    <Blank $h={36} />
    <MathLine><i>обратная замена</i><Colon>:</Colon><Quad $w={22} /><T /><Op>=</Op>1,<Quad />7<X /><Op>=</Op>1,<Quad $w={22} />7<X /><Op>=</Op>7<Sup>0</Sup></MathLine>
    <Blank $h={34} />
    <MathLine><Answer><Var>x</Var><Op>=</Op>0</Answer></MathLine>
  </Sheet>
);

const SideScroll = () => (
  <ScrollBar>
    <ScrollButton $h={7} aria-label="Разделить"><svg width="9" height="2"><rect width="9" height="2" fill="#777c84" /></svg></ScrollButton>
    <ScrollButton $h={16} aria-label="Линейка"><svg width="12" height="12" viewBox="0 0 12 12" fill="none" stroke="#777c84"><path d="M.5.500h3l1 2 1-2h3v3h3v8H4v-3H.5zM6 5l2 3 2-2M6 10l2-2 2 3" /></svg></ScrollButton>
    <ScrollButton $h={18} $top aria-label="Прокрутить вверх"><ScrollArrow /></ScrollButton>
    <ScrollTrack>
      <ScrollThumb><svg width="8" height="8" viewBox="0 0 8 8"><path d="M0 .5h8M0 3.500h8M0 6.500h8" stroke="#7b8089" /></svg></ScrollThumb>
    </ScrollTrack>
    <ScrollButton $h={14} aria-label="Прокрутить вниз"><ScrollArrow down /></ScrollButton>
    <ScrollButton $h={17} $top aria-label="Предыдущая"><DoubleArrow /></ScrollButton>
    <ScrollButton $h={17} aria-label="Объект перехода"><svg width="7" height="7" viewBox="0 0 7 7"><circle cx="3.500" cy="3.500" r="3" fill="#c9cdd4" stroke="#555" /></svg></ScrollButton>
    <ScrollButton $h={18} aria-label="Следующая"><DoubleArrow down /></ScrollButton>
  </ScrollBar>
);

const Status = () => (
  <StatusBar>
    <StatusCell>Страница: 1 из 1</StatusCell>
    <StatusCell>Число слов: 0</StatusCell>
    <StatusCell><Proof />русский</StatusCell>
    <ViewTools>
      <ViewButton $on aria-label="Разметка страницы"><PageView /></ViewButton>
      <ViewButton aria-label="Режим чтения"><BookView /></ViewButton>
      <ViewButton aria-label="Веб-документ"><WebView /></ViewButton>
      <ViewButton aria-label="Структура"><OutlineView /></ViewButton>
      <ViewButton aria-label="Черновик"><DraftView /></ViewButton>
      <Percent>112%</Percent>
      <RoundButton aria-label="Уменьшить"><svg width="8" height="2"><rect width="8" height="2" fill="#444" /></svg></RoundButton>
      <ZoomSlider type="range" min={0} max={100} defaultValue={52} aria-label="Масштаб" />
      <RoundButton aria-label="Увеличить"><svg width="8" height="8" viewBox="0 0 8 8"><path d="M4 0v8M0 4h8" stroke="#444" strokeWidth="2" /></svg></RoundButton>
    </ViewTools>
  </StatusBar>
);

const Tasks = () => (
  <TaskBar>
    <StartButton aria-label="Пуск"><StartOrb /></StartButton>
    <TaskButton $plain aria-label="Internet Explorer"><Explorer /></TaskButton>
    <TaskButton aria-label="Проводник"><Folder /></TaskButton>
    <TaskButton aria-label="Chrome"><Chrome /></TaskButton>
    <TaskButton aria-label="Skype"><Skype /></TaskButton>
    <TaskButton aria-label="Фигуры"><Shapes /></TaskButton>
    <TaskButton $active aria-label="Word"><WordTask /></TaskButton>
    <Tray>
      <Language $w={30}>RU</Language>
      <TrayButton $w={24} aria-label="Скрытые значки"><svg width="7" height="4" viewBox="0 0 7 4"><path d="M0 4h7L3.500 0z" fill="#fff" /></svg></TrayButton>
      <TrayButton $w={24} aria-label="Громкость"><Speaker /></TrayButton>
      <TrayButton $w={24} aria-label="Центр поддержки"><Flag /></TrayButton>
      <TrayButton $w={24} aria-label="Сеть"><Network /></TrayButton>
      <TrayButton $w={28} aria-label="NVIDIA"><Leaf /></TrayButton>
      <Clock>{"10:28\n06.04.2017"}</Clock>
      <ShowDesktop aria-label="Свернуть все окна" />
    </Tray>
  </TaskBar>
);

export default function App() {
  return (
    <Window>
      <GlobalStyle />
      <Header><TitleStrip /><Tabs /></Header>
      <Ribbon>
        <ClipboardGroup />
        <FontGroup />
        <ParagraphGroup />
        <StylesGroup />
        <EditingGroup />
      </Ribbon>
      <Workspace>
        <Canvas><Document /></Canvas>
        <SideScroll />
      </Workspace>
      <Status />
      <Tasks />
    </Window>
  );
}
